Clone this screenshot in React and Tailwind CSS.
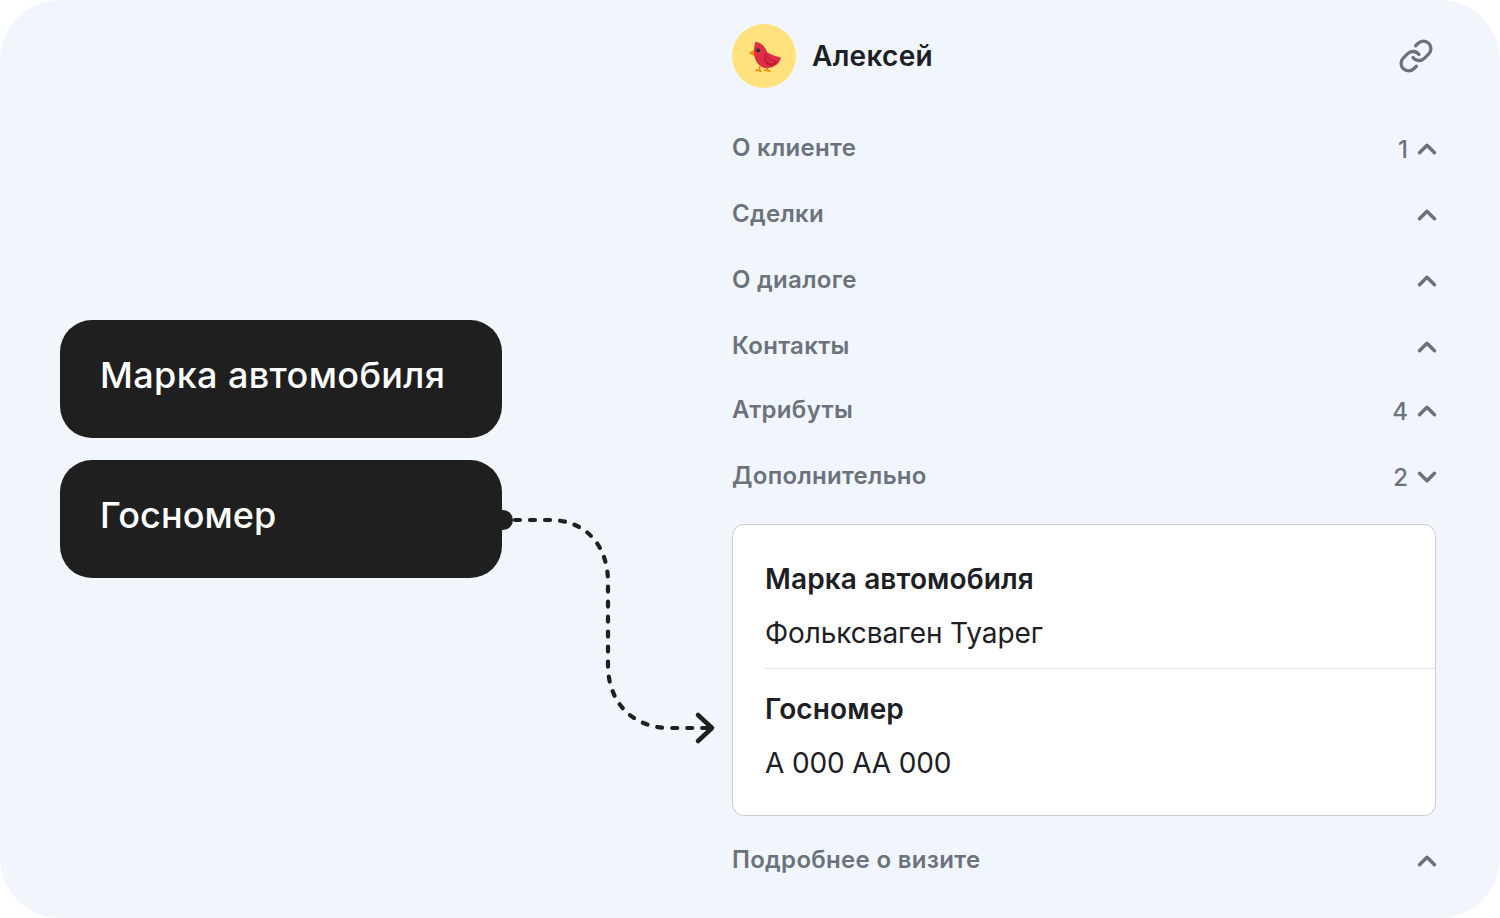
import { Link, ChevronUp, ChevronDown } from 'lucide-react';

function Bird() {
  return (
    <svg width="36" height="36" viewBox="0 0 34 34">
      <path d="M2.500 14.500 L8.500 10.500 L8.500 17.500 Z" fill="#f4900c" />
      <path d="M13 27 L12.500 31 M12.500 30 L9.500 30.500 M12.500 30 L14.500 31.500 M20 27 L20.500 31 M20.500 30 L17.500 30.500 M20.500 30 L22.500 31.500" stroke="#f4900c" strokeWidth="1.600" fill="none" strokeLinecap="round" />
      <path d="M7.500 13 C7.500 9 8.500 5.500 8.500 4 C11 3.500 13 4.500 14.500 6 C18 8 19 11 20 13.500 C23 15.500 28 17.500 33 18.500 C32 24 26.500 28.500 20 28.500 C12.500 28.500 7.500 21 7.500 13 Z" fill="#dd2e44" />
      <path d="M18 14 C20 18 24 21 30 22 C27 26.500 23 27 20.500 25.500 C17.500 23.500 16 18 18 14 Z" fill="#be1931" />
      <path d="M18.500 15.500 C20 19 24 22 28 22.500 C25.500 24.500 23 24.500 21 23 C19 21.500 18 18.500 18.500 15.500 Z" fill="#dd2e44" />
      <circle cx="11.500" cy="11.500" r="1.900" fill="#292f33" />
    </svg>
  );
}

function Row({ label, count, open, className }) {
  const Chevron = open ? ChevronDown : ChevronUp;
  return (
    <div className={`flex items-center justify-between ${className}`}>
      <span className="text-[24px] font-semibold leading-none tracking-[0.3px] text-[#6b727c]">{label}</span>
      <span className="flex items-center gap-1 pt-[3px] text-[24px] font-medium leading-none text-[#6b727c]">
        {count}
        <Chevron size={30} strokeWidth={2.8} className="mr-[-6px] mt-[-2px] text-[#6b727c]" />
      </span>
    </div>
  );
}

function Field({ title, value, divider, valueClass }) {
  return (
    <div className={`ml-8 flex flex-col ${divider ? 'h-[144px] border-b border-[#dfe3e8] pt-[36px]' : 'h-[146px] pt-[22px]'}`}>
      <div className="text-[28px] font-semibold leading-[36px] tracking-[0.12px] text-[#1c2024]">{title}</div>
      <div className={`mt-[18px] text-[28px] leading-[36px] text-[#1c2024] ${valueClass}`}>{value}</div>
    </div>
  );
}

export default function App() {
  return (
    <div className="relative flex h-[918px] w-[1500px] overflow-hidden rounded-[60px] bg-[#f1f6fd] font-['Inter',sans-serif]">
      <div className="ml-[60px] mt-[320px] flex w-[442px] flex-col gap-[22px]">
        <div className="flex h-[118px] items-center rounded-[32px] bg-[#1f1f1f] px-10 pb-2 text-[36px] font-medium tracking-[0.38px] text-white">Марка автомобиля</div>
        <div className="flex h-[118px] items-center rounded-[32px] bg-[#1f1f1f] px-10 pb-2 text-[36px] font-medium tracking-[0.1px] text-white">Госномер</div>
      </div>

      <div className="ml-[230px] w-[704px] pt-6">
        <div className="mb-[27px] flex h-16 items-center justify-between">
          <div className="flex items-center gap-4">
            <div className="flex h-16 w-16 items-center justify-center rounded-full bg-[#ffe27d]">
              <Bird />
            </div>
            <span className="text-[28px] font-semibold tracking-[0.3px] text-[#1c2024]">Алексей</span>
          </div>
          <Link size={36} strokeWidth={2.2} className="mr-[2px] text-[#6b727c]" />
        </div>
        <Row label="О клиенте" count="1" className="h-[66px]" />
        <Row label="Сделки" className="h-[66px]" />
        <Row label="О диалоге" className="h-[66px]" />
        <Row label="Контакты" className="h-[66px]" />
        <Row label="Атрибуты" count="4" className="h-[62px]" />
        <Row label="Дополнительно" count="2" open className="h-[70px]" />
        <div className="mt-[13px] rounded-[12px] border border-[#c9ced4] bg-white">
          <Field title="Марка автомобиля" value="Фольксваген Туарег" valueClass="tracking-[-0.1px]" divider />
          <Field title="Госномер" value="А 000 АА 000" valueClass="tracking-[-0.15px]" />
        </div>
        <Row label="Подробнее о визите" className="mt-[11px] h-[66px]" />
      </div>

      <svg className="pointer-events-none absolute inset-0" width="1500" height="918" fill="none">
        <circle cx="503" cy="520" r="10" fill="#1f1f1f" />
        <path d="M515 520 H550 C585 520 608 545 608 582 V665 C608 702 632 728 670 728 H708" stroke="#1f1f1f" strokeWidth="4.200" strokeLinecap="round" strokeDasharray="5 10" />
        <path d="M698 715 L712 728 L698 741" stroke="#1f1f1f" strokeWidth="4.500" strokeLinecap="round" strokeLinejoin="round" />
      </svg>
    </div>
  );
}
